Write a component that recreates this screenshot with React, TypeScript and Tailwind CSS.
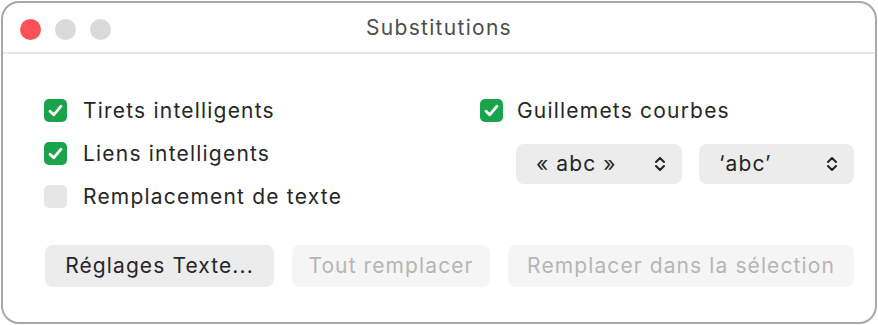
const font = { fontFamily: 'Inter, "Noto Sans", "Liberation Sans", sans-serif' };

function Checkbox({ checked }: { checked: boolean }) {
  if (!checked) {
    return <div className="w-[23px] h-[23px] rounded-[5px] bg-[#e6e6e6] shrink-0" />;
  }
  return (
    <div className="w-[23px] h-[23px] rounded-[5px] bg-[#19a44c] shrink-0 flex items-center justify-center">
      <svg width="15" height="13" viewBox="0 0 15 13" fill="none">
        <path d="M2 7.2 L5.7 10.8 L13 2.2" stroke="white" strokeWidth="2.8" strokeLinecap="round" strokeLinejoin="round" />
      </svg>
    </div>
  );
}

function CheckRow({ checked, label, gap }: { checked: boolean; label: string; gap: string }) {
  return (
    <div className={`flex items-center ${gap} h-[23px]`}>
      <Checkbox checked={checked} />
      <span className="text-[21px] text-[#262626] tracking-[1.2px]">{label}</span>
    </div>
  );
}

function Chevrons() {
  return (
    <svg width="12" height="18" viewBox="0 0 12 18" fill="none">
      <path d="M2 7 L6 3 L10 7" stroke="#222" strokeWidth="2" strokeLinecap="round" strokeLinejoin="round" />
      <path d="M2 11 L6 15 L10 11" stroke="#222" strokeWidth="2" strokeLinecap="round" strokeLinejoin="round" />
    </svg>
  );
}

function Popup({ label, width }: { label: string; width: string }) {
  return (
    <div className={`${width} h-[40px] rounded-[8px] bg-[#ececec] flex items-center justify-between pl-[20px] pr-[16px]`}>
      <span className="text-[21px] text-[#262626] tracking-[1.1px]">{label}</span>
      <Chevrons />
    </div>
  );
}

export default function App() {
  return (
    <div className="w-[878px] h-[325px] bg-white p-[1px]" style={font}>
      <div className="w-full h-full border-2 border-[#a8a8a8] rounded-[18px] bg-white flex flex-col overflow-hidden">
        {/* Title bar */}
        <div className="relative h-[51px] shrink-0 border-b-2 border-[#e6e6e6] flex items-center justify-center">
          <div className="absolute left-[17px] top-[16px] flex gap-[14px]">
            <div className="w-[21px] h-[21px] rounded-full bg-[#fe5257]" />
            <div className="w-[21px] h-[21px] rounded-full bg-[#dadada]" />
            <div className="w-[21px] h-[21px] rounded-full bg-[#dadada]" />
          </div>
          <span className="text-[21px] text-[#4d4d4d] tracking-[1.3px]">Substitutions</span>
        </div>

        {/* Content */}
        <div className="flex pl-[41px] pt-[45px]">
          <div className="w-[436px] flex flex-col gap-[20px]">
            <CheckRow checked gap="gap-[16px]" label="Tirets intelligents" />
            <CheckRow checked gap="gap-[16px]" label="Liens intelligents" />
            <CheckRow checked={false} gap="gap-[16px]" label="Remplacement de texte" />
          </div>
          <div className="flex flex-col">
            <CheckRow checked gap="gap-[14px]" label="Guillemets courbes" />
            <div className="flex gap-[17px] mt-[22px] ml-[36px]">
              <Popup label="« abc »" width="w-[166px]" />
              <Popup label="‘abc’" width="w-[155px]" />
            </div>
          </div>
        </div>

        <div className="flex gap-[18px] pl-[42px] mt-[37px] text-[21px] tracking-[1.1px]">
          <div className="w-[229px] h-[42px] rounded-[8px] bg-[#ececec] flex items-center justify-center text-[#262626]">
            Réglages Texte...
          </div>
          <div className="w-[198px] h-[42px] rounded-[8px] bg-[#f5f5f5] flex items-center justify-center text-[#b5b5b5]">
            Tout remplacer
          </div>
          <div className="w-[346px] h-[42px] rounded-[8px] bg-[#f5f5f5] flex items-center justify-center text-[#b5b5b5]">
            Remplacer dans la sélection
          </div>
        </div>
      </div>
    </div>
  );
}
